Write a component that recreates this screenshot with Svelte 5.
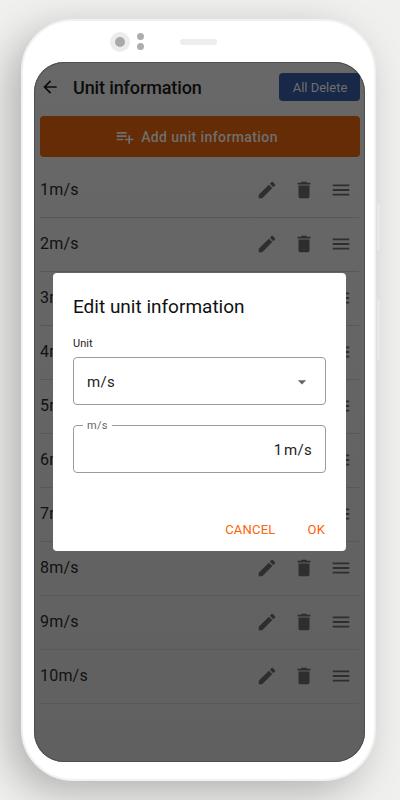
<script>
const units = [1, 2, 3, 4, 5, 6, 7, 8, 9, 10];
</script>

<div class="page">
    <div class="phone">
        <span class="side-btn one"></span>
        <span class="side-btn two"></span>
        <div class="notch">
            <span class="camera"></span>
            <span class="sensors"><i></i><i></i></span>
            <span class="speaker"></span>
        </div>
        <div class="screen">
            <header class="topbar">
                <svg class="back" viewBox="0 0 24 24" width="20" height="20"><path d="M20 11H7.83l5.59-5.59L12 4l-8 8 8 8 1.41-1.41L7.83 13H20v-2z" /></svg>
                <h1>Unit information</h1>
                <button class="all-delete">All Delete</button>
            </header>
            <button class="add-btn">
                <svg viewBox="0 0 24 24" width="20" height="20"><path d="M14 10H2v2h12v-2zm0-4H2v2h12V6zm4 8v-4h-2v4h-4v2h4v4h2v-4h4v-2h-4zM2 16h8v-2H2v2z" /></svg>
                Add unit information
            </button>
            <ul class="list">
                {#each units as n}
                    <li>
                        <span class="name">{n}m/s</span>
                        <svg viewBox="0 0 24 24" width="22" height="22"><path d="M3 17.25V21h3.75L17.81 9.94l-3.75-3.75L3 17.25zM20.71 7.04c.39-.39.39-1.02 0-1.41l-2.34-2.34c-.39-.39-1.02-.39-1.41 0l-1.83 1.83 3.75 3.75 1.83-1.83z" /></svg>
                        <svg viewBox="0 0 24 24" width="22" height="22"><path d="M6 19c0 1.1.9 2 2 2h8c1.1 0 2-.9 2-2V7H6v12zM19 4h-3.5l-1-1h-5l-1 1H5v2h14V4z" /></svg>
                        <svg viewBox="0 0 24 24" width="22" height="22"><path d="M3 18h18v-2H3v2zm0-5h18v-2H3v2zm0-7v2h18V6H3z" /></svg>
                    </li>
                {/each}
            </ul>
            <div class="dialog">
                <h2>Edit unit information</h2>
                <div class="caption">Unit</div>
                <div class="box select">
                    <span>m/s</span>
                    <svg viewBox="0 0 24 24" width="20" height="20"><path d="M7 10l5 5 5-5z" /></svg>
                </div>
                <div class="box field">
                    <span class="legend">m/s</span>
                    <span class="value">1 m/s</span>
                </div>
                <div class="actions">
                    <button>CANCEL</button>
                    <button>OK</button>
                </div>
            </div>
        </div>
    </div>
</div>

<style>
:global(body) {
    margin: 0;
}

.page {
    width: 400px;
    height: 800px;
    box-sizing: border-box;
    padding: 19px 24px 19px 21px;
    background: #f0f0ee;
    overflow: hidden;
    font-family: Roboto, sans-serif;
}

.phone {
    position: relative;
    box-sizing: border-box;
    width: 355px;
    height: 762px;
    padding: 0 9px 17px 11px;
    background: #fff;
    border: 2px solid #f1f1f1;
    border-radius: 52px;
    box-shadow: -12px 12px 40px rgba(0, 0, 0, 0.26);
}

.side-btn {
    position: absolute;
    right: -6px;
    width: 3px;
    background: #e8e8e8;
}

.side-btn.one {
    top: 183px;
    height: 46px;
}

.side-btn.two {
    top: 279px;
    height: 60px;
}

.notch {
    display: flex;
    align-items: center;
    height: 41px;
    padding-left: 76px;
    box-sizing: border-box;
}

.camera {
    width: 10px;
    height: 10px;
    border-radius: 50%;
    background: #a9a9a9;
    border: 5px solid #ececec;
}

.sensors {
    display: flex;
    flex-direction: column;
    gap: 3px;
    margin-left: 7px;
}

.sensors i {
    display: block;
    width: 7px;
    height: 7px;
    border-radius: 50%;
    background: #adadad;
}

.speaker {
    width: 37px;
    height: 6px;
    border-radius: 3px;
    background: #ededed;
    margin-left: 36px;
}

.screen {
    position: relative;
    height: 700px;
    border-radius: 30px;
    overflow: hidden;
    background: linear-gradient(#686868, #606060);
    box-shadow: inset 0 0 0 1px #4f4f4f;
}

.topbar {
    display: flex;
    align-items: center;
    height: 54px;
    padding: 0 5px 4px 6px;
    box-sizing: border-box;
}

.back {
    fill: #0c0c0c;
}

h1 {
    flex: 1;
    margin: 0 0 0 13px;
    font-size: 18px;
    font-weight: 500;
    letter-spacing: -0.12px;
    color: #0c0c0c;
}

button {
    border: none;
    font-family: inherit;
    cursor: pointer;
}

.all-delete {
    width: 81px;
    height: 28px;
    border-radius: 4px;
    background: #182848;
    color: #6f6f6f;
    font-size: 13px;
    padding: 0 0 0 1px;
}

.add-btn {
    display: flex;
    align-items: center;
    justify-content: center;
    gap: 6px;
    width: 320px;
    height: 41px;
    margin-left: 6px;
    padding: 0 7px 0 0;
    border-radius: 4px;
    background: #652c05;
    color: #6f6f6f;
    font-size: 14px;
    font-weight: 500;
    letter-spacing: 0.4px;
}

.add-btn svg {
    fill: #6f6f6f;
}

.list {
    list-style: none;
    margin: 7px 0 0;
    padding: 0 6px;
}

li {
    display: flex;
    align-items: center;
    gap: 15px;
    height: 54px;
    box-sizing: border-box;
    padding: 0 7px 2px 0;
    border-bottom: 1px solid #585858;
}

li svg {
    fill: #2e2e2e;
}

.name {
    flex: 1;
    font-size: 16px;
    color: #111;
    letter-spacing: 0.2px;
}

.dialog {
    position: absolute;
    left: 19px;
    top: 211px;
    width: 293px;
    height: 278px;
    box-sizing: border-box;
    padding: 22px 20px 0;
    background: #fff;
    border-radius: 4px;
}

h2 {
    margin: 0;
    font-size: 19px;
    font-weight: 400;
    line-height: 24px;
    color: #111;
}

.caption {
    margin-top: 18px;
    font-size: 11px;
    line-height: 14px;
    color: #222;
}

.box {
    position: relative;
    display: flex;
    align-items: center;
    height: 48px;
    box-sizing: border-box;
    padding: 1px 13px 0;
    border: 1px solid #9b9b9b;
    border-radius: 4px;
    font-size: 15px;
    color: #222;
    letter-spacing: 0.3px;
}

.select {
    justify-content: space-between;
    margin-top: 6px;
}

.select svg {
    fill: #666;
}

.field {
    justify-content: flex-end;
    margin-top: 20px;
}

.value {
    word-spacing: -2.6px;
}

.legend {
    position: absolute;
    left: 9px;
    top: -7px;
    padding: 0 4px;
    background: #fff;
    font-size: 11px;
    line-height: 13px;
    color: #666;
}

.actions {
    display: flex;
    justify-content: flex-end;
    gap: 32px;
    margin-top: 49px;
    padding-right: 1px;
}

.actions button {
    padding: 0;
    background: none;
    color: #ff6207;
    font-size: 13px;
    font-weight: 400;
    letter-spacing: 0.2px;
}
</style>
